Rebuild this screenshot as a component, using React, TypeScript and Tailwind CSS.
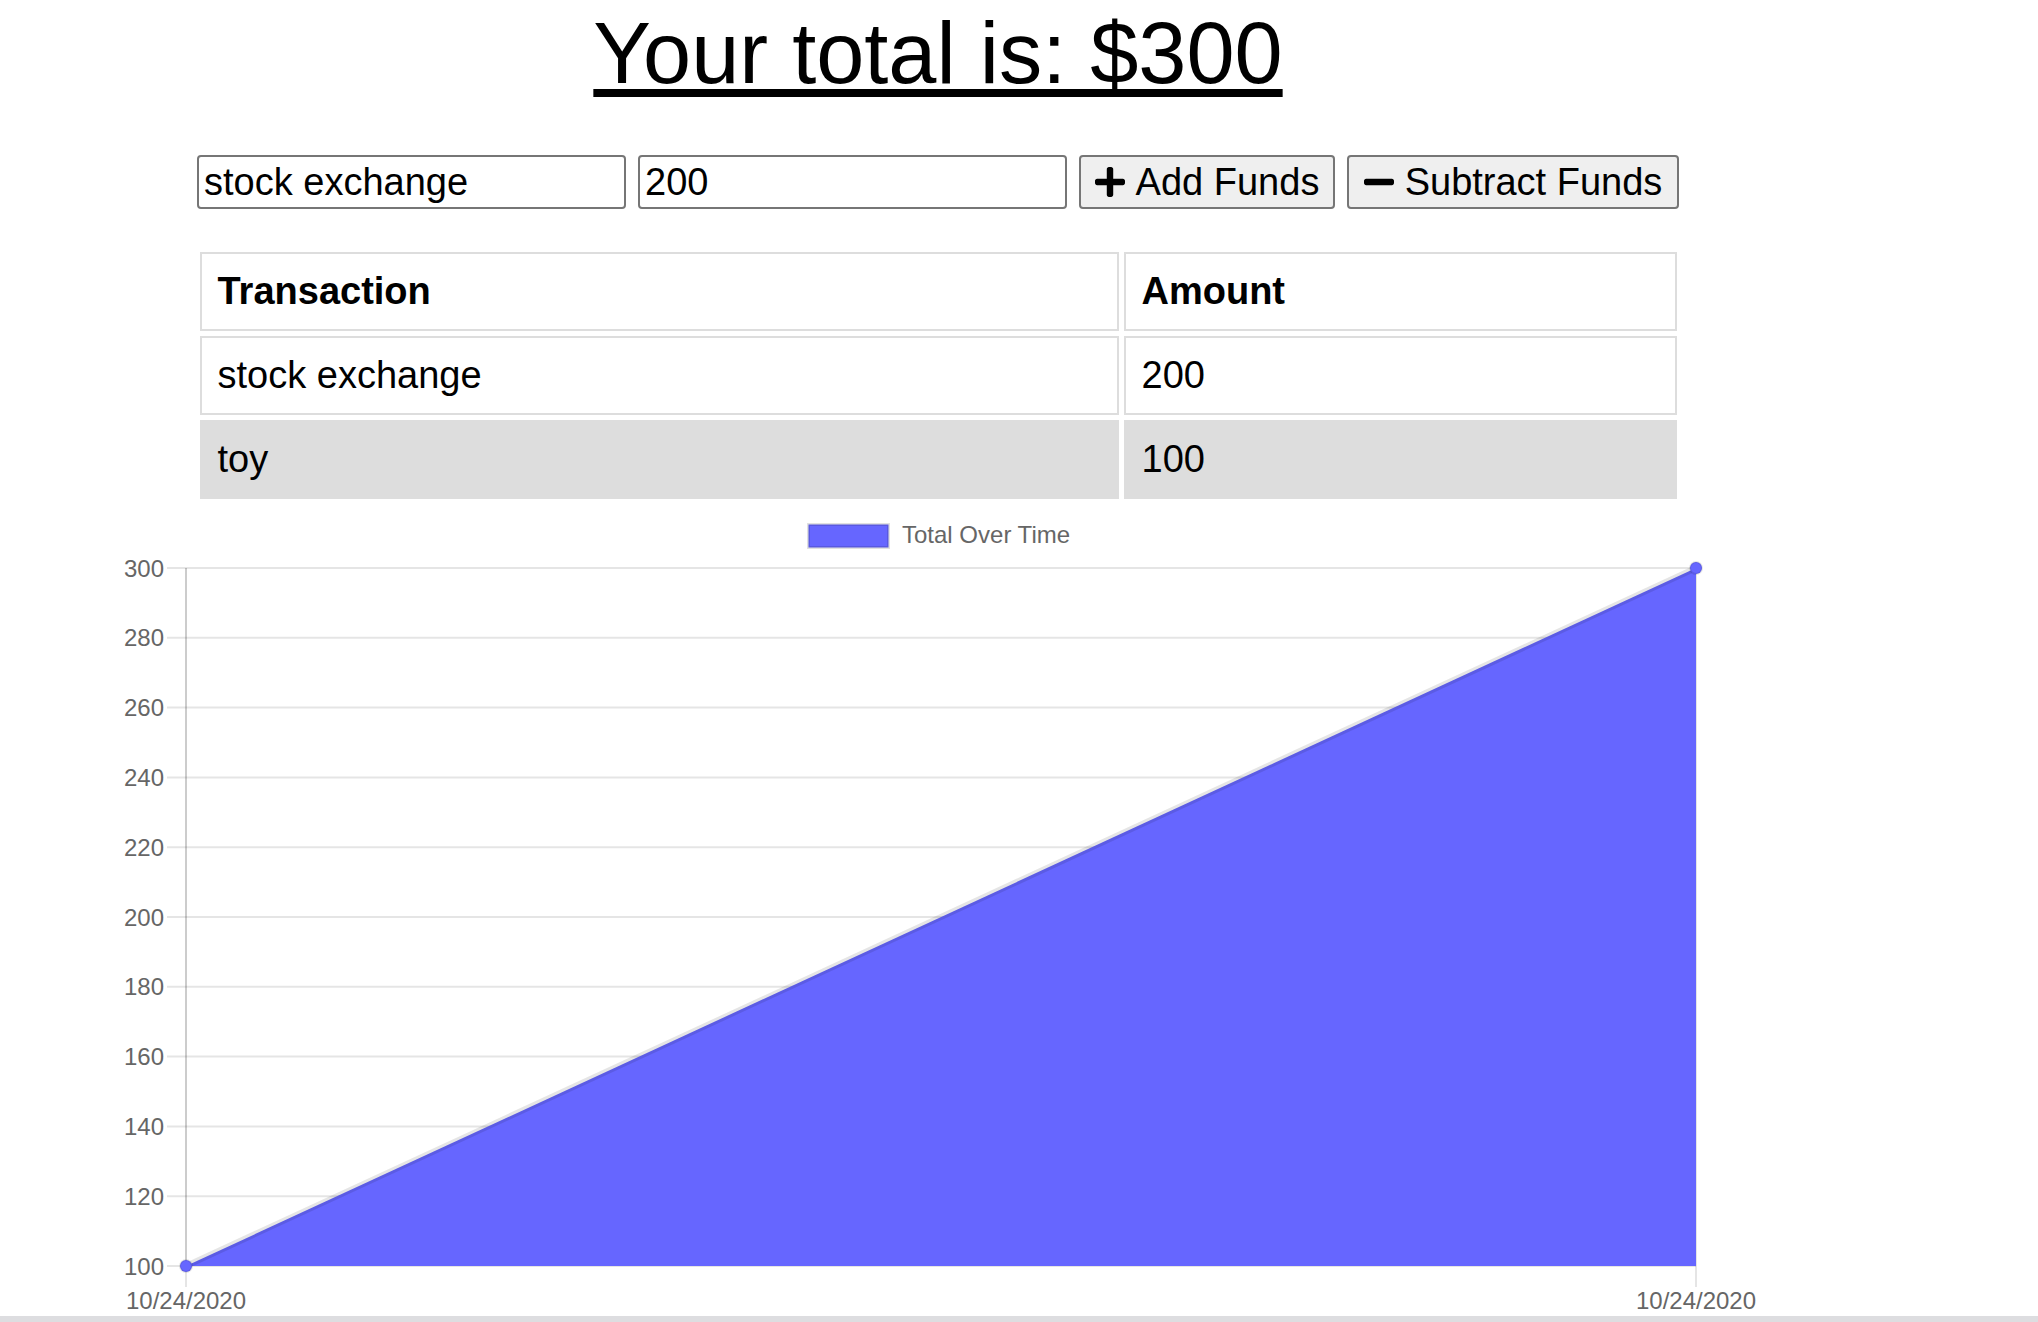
import React from "react";

const rows = [
  { name: "stock exchange", value: 200 },
  { name: "toy", value: 100 },
];

const yTicks = [300, 280, 260, 240, 220, 200, 180, 160, 140, 120, 100];

// chart area in page coordinates
const left = 186;
const right = 1696;
const top = 568;
const bottom = 1266;

const PlusIcon = () => (
  <svg width="30" height="30" viewBox="0 32 448 448" fill="currentColor">
    <path d="M416 208H272V64c0-17.67-14.33-32-32-32h-32c-17.67 0-32 14.33-32 32v144H32c-17.67 0-32 14.33-32 32v32c0 17.67 14.33 32 32 32h144v144c0 17.67 14.33 32 32 32h32c17.67 0 32-14.33 32-32V304h144c17.67 0 32-14.33 32-32v-32c0-17.67-14.33-32-32-32z" />
  </svg>
);

const MinusIcon = () => (
  <svg width="30" height="30" viewBox="0 32 448 448" fill="currentColor">
    <path d="M416 208H32c-17.67 0-32 14.33-32 32v32c0 17.670 14.33 32 32 32h384c17.67 0 32-14.33 32-32v-32c0-17.67-14.33-32-32-32z" />
  </svg>
);

const Chart = () => {
  const step = (bottom - top) / 10;
  return (
    <svg width="1876" height="812" viewBox="0 504 1876 812" className="block">
      {/* legend */}
      <rect x="808.5" y="524.5" width="80" height="23" fill="#6666ff" stroke="rgba(0,0,0,0.12)" strokeWidth="3" />
      <text x="902" y="543" fontSize="24" fill="#666">
        Total Over Time
      </text>

      {/* horizontal grid + y labels */}
      {yTicks.map((t, i) => {
        const y = top + i * step;
        return (
          <g key={t}>
            <line x1="167" x2={right} y1={y} y2={y} stroke="rgba(0,0,0,0.1)" strokeWidth="2" />
            <text x="164" y={y + 8.6} fontSize="24" fill="#666" textAnchor="end">
              {t}
            </text>
          </g>
        );
      })}

      {/* vertical grid */}
      <line x1={left} x2={left} y1={top} y2={bottom} stroke="rgba(0,0,0,0.2)" strokeWidth="2" />
      <line x1={left} x2={left} y1={bottom} y2={1287} stroke="rgba(0,0,0,0.1)" strokeWidth="2" />
      <line x1={right} x2={right} y1={top} y2={1287} stroke="rgba(0,0,0,0.1)" strokeWidth="2" />

      {/* area */}
      <polygon points={`${left},${bottom} ${right},${top} ${right},${bottom}`} fill="#6666ff" />
      <line x1={left} y1={bottom} x2={right} y2={top} stroke="rgba(0,0,0,0.1)" strokeWidth="6" />
      <circle cx={left} cy={bottom} r="6" fill="#6666ff" stroke="rgba(0,0,0,0.1)" strokeWidth="2" />
      <circle cx={right} cy={top} r="6" fill="#6666ff" stroke="rgba(0,0,0,0.1)" strokeWidth="2" />

      {/* x labels */}
      <text x={left} y="1309" fontSize="24" fill="#666" textAnchor="middle">
        10/24/2020
      </text>
      <text x={right} y="1309" fontSize="24" fill="#666" textAnchor="middle">
        10/24/2020
      </text>
    </svg>
  );
};

const App: React.FC = () => {
  return (
    <div className="w-[2038px] h-[1322px] overflow-hidden bg-white text-black font-['Liberation_Sans',Arial,sans-serif]">
      <div className="w-[1876px]">
        {/* total */}
        <h1 className="pt-[4px] text-center text-[86.5px] leading-[98px] font-normal underline decoration-[8px] underline-offset-[6px]">
          Your total is: $300
        </h1>

        {/* form */}
        <div className="mt-[53px] flex justify-center gap-[12px] text-[38px]">
          <input
            readOnly
            value="stock exchange"
            className="w-[429px] h-[54px] px-[5px] border-2 border-[#767676] rounded-[4px] bg-white outline-none"
          />
          <input
            readOnly
            value="200"
            className="w-[429px] h-[54px] px-[5px] border-2 border-[#767676] rounded-[4px] bg-white outline-none"
          />
          <button className="w-[256px] h-[54px] flex items-center justify-center gap-[11px] border-2 border-[#767676] rounded-[4px] bg-[#efefef]">
            <PlusIcon />
            <span>Add Funds</span>
          </button>
          <button className="w-[332px] h-[54px] flex items-center justify-center gap-[11px] border-2 border-[#767676] rounded-[4px] bg-[#efefef]">
            <MinusIcon />
            <span>Subtract Funds</span>
          </button>
        </div>

        {/* transactions */}
        <table className="mt-[38px] mx-auto w-[1487px] table-fixed border-separate border-spacing-[5px] text-[38px] text-left">
          <thead>
            <tr>
              <th className="w-[919px] h-[79px] px-[16px] py-0 leading-[43px] border-2 border-[#dddddd] font-bold">
                Transaction
              </th>
              <th className="w-[553px] h-[79px] px-[16px] py-0 leading-[43px] border-2 border-[#dddddd] font-bold">
                Amount
              </th>
            </tr>
          </thead>
          <tbody>
            {rows.map((r, i) => (
              <tr key={r.name} className={i % 2 === 1 ? "bg-[#dddddd]" : ""}>
                <td className="h-[79px] px-[16px] py-0 leading-[43px] border-2 border-[#dddddd]">{r.name}</td>
                <td className="h-[79px] px-[16px] py-0 leading-[43px] border-2 border-[#dddddd]">{r.value}</td>
              </tr>
            ))}
          </tbody>
        </table>

        <Chart />
      </div>
      <div className="w-full h-[6px] bg-[#dddde0]" />
    </div>
  );
};

export default App;
